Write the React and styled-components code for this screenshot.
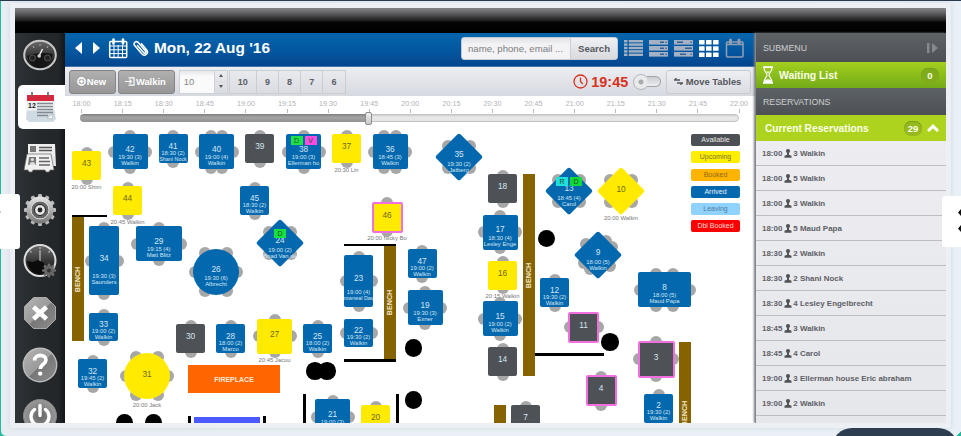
import React from 'react';
import styled, { createGlobalStyle, css } from 'styled-components';

const Global = createGlobalStyle`
  * { box-sizing: border-box; }
  html, body { margin: 0; padding: 0; overflow: hidden; background: #22bb9c; }
  body { font-family: "Liberation Sans", Arial, sans-serif; }
`;

const Page = styled.div`
  position: relative;
  width: 961px;
  height: 436px;
  overflow: hidden;
  padding-left: 1px;
  border-top: 1px solid #2a3850;
`;
const Frame = styled.div`
  height: 435px;
  padding: 2px 5px 3px 9px;
  background: linear-gradient(90deg, #e7edf3, #eaf0f5 50%, #e9f0f6);
  border-radius: 0 0 5px 5px;
`;
const Bezel = styled.div`
  width: 941px;
  height: 425px;
  padding: 5px 5px 5px 5px;
  background: #eceff4;
  border-radius: 0 0 3px 3px;
  box-shadow: 0 0 4px #cfd8df;
`;
const Device = styled.div`
  width: 931px;
  height: 415px;
  overflow: hidden;
  background: #fff;
`;
const StatusBar = styled.div`
  height: 25px;
  background: linear-gradient(#858589 0, #616164 5px, #2c2c2d 11px, #1a1a1b 13px, #050505 14px, #000 100%);
`;
const Columns = styled.div`
  display: grid;
  grid-template-columns: 50px 690px 191px;
  height: 390px;
`;

/* ---------- sidebar ---------- */
const Sidebar = styled.nav`
  display: flex;
  flex-direction: column;
  align-items: flex-end;
  background: linear-gradient(90deg, #2e3337, #24282b 50%, #23272a 86%, #14171a);
  overflow: hidden;
`;
const SideItem = styled.div`
  display: flex;
  align-items: center;
  justify-content: center;
  flex: none;
  width: 47px;
  height: 44px;
  margin-bottom: 7.6px;
  padding-right: 4px;
  border-radius: 5px 0 0 5px;
  background: ${p => (p.$active ? '#fff' : 'transparent')};
  svg { display: block; }
`;

/* ---------- main ---------- */
const Main = styled.main`
  display: flex;
  flex-direction: column;
  overflow: hidden;
`;
const Header = styled.header`
  display: flex;
  align-items: center;
  height: 34px;
  padding: 0 9px 4px 9px;
  background: linear-gradient(#0565ab, #0358a0 50%, #04458f 96%, #6790bb);
  svg { display: block; flex: none; }
`;
const DateNav = styled.div`
  display: flex;
  align-items: center;
  gap: 5px;
  width: 80px;
`;
const DateTitle = styled.h1`
  margin: 0;
  width: 307px;
  color: #fff;
  font-size: 15.4px;
  line-height: 20px;
  white-space: nowrap;
`;
const SearchBox = styled.div`
  display: flex;
  width: 157px;
  height: 23px;
  border-radius: 3px;
  overflow: hidden;
  background: linear-gradient(#dfe0e4, #f3f3f6 30%, #f3f3f6);
  border: 1px solid #c3cad6;
  line-height: 21px;
  font-size: 9.6px;
`;
const SearchHint = styled.span`
  width: 108px;
  padding-left: 6px;
  color: #7c7c80;
  white-space: nowrap;
`;
const SearchButton = styled.b`
  flex: 1;
  text-align: center;
  color: #57585d;
  background: linear-gradient(#eff0f3, #d9dade);
  border-left: 1px solid #cdced4;
`;
const Views = styled.div`
  display: flex;
  align-items: center;
  gap: 6px;
  margin-left: 6px;
`;
const Toolbar = styled.div`
  display: flex;
  align-items: center;
  height: 29px;
  padding: 0 4px;
  background: linear-gradient(#edeef2, #d6d9e0);
`;
const Button = styled.button`
  display: flex;
  align-items: center;
  justify-content: center;
  gap: ${p => (p.$light ? 3 : 1)}px;
  width: ${p => p.$w}px;
  height: 24px;
  margin: 0 ${p => p.$gap || 0}px 0 0;
  padding: 0 2px 0 0;
  border-radius: 3px;
  border: 1px solid ${p => (p.$light ? '#c8cad0' : '#858587')};
  background: ${p => (p.$light ? 'linear-gradient(#eeeff3, #dadce2)' : 'linear-gradient(#b0b0b1, #969697)')};
  color: ${p => (p.$light ? '#54565b' : '#fff')};
  font: bold 9.4px "Liberation Sans", Arial, sans-serif;
  white-space: nowrap;
`;
const Spinner = styled.div`
  display: grid;
  grid-template-columns: 34px 13px;
  grid-template-rows: 11px 11px;
  width: 49px;
  height: 24px;
  margin-right: 3px;
  border: 1px solid #cfd1d6;
  color: #86878b;
  font-size: 9.5px;
  line-height: 21px;
`;
const SpinValue = styled.span`
  grid-row: 1 / 3;
  padding-left: 4px;
  background: linear-gradient(#e6e7ea, #fafafb 25%);
`;
const SpinArrow = styled.span`
  display: flex;
  align-items: center;
  justify-content: center;
  border-left: 1px solid #cfd1d6;
  border-bottom: 1px solid #d9dbe0;
`;
const NumberGroup = styled.div`
  display: flex;
  height: 24px;
  width: 228px;
  margin-left: -2px;
`;
const NumberButton = styled.b`
  width: ${p => p.$w}px;
  border: solid #cbcdd3;
  border-width: 1px 1px 1px ${p => (p.$first ? 1 : 0)}px;
  background: linear-gradient(#e9eaee, #dadce2);
  color: #5d5f65;
  font-size: 9px;
  line-height: 22px;
  text-align: center;
`;
const Clock = styled.div`
  display: flex;
  align-items: center;
  gap: 3px;
  width: 60px;
  margin-left: 117px;
  color: #d8311c;
  font-size: 14.4px;
  font-weight: bold;
  svg { flex: none; }
`;
const Toggle = styled.div`
  display: flex;
  align-items: center;
  width: 29px;
  height: 16px;
  margin-right: 4px;
`;
const ToggleKnob = styled.span`
  width: 16px;
  height: 16px;
  flex: none;
  border-radius: 50%;
  border: 1px solid #b5b6ba;
  background: radial-gradient(#aaa 0 2px, #e9eaec 3px 100%);
`;
const ToggleTrack = styled.span`
  width: 14px;
  height: 11px;
  margin-left: -2px;
  border: 1px solid #a4a5aa;
  border-left: 0;
  border-radius: 0 6px 6px 0;
  background: linear-gradient(#cbccd0, #edeef0);
`;

/* ---------- timeline ---------- */
const Timeline = styled.section`
  height: 30px;
  background: #fff;
`;
const Hours = styled.div`
  display: flex;
  width: 700px;
  height: 17px;
  margin-left: -4px;
  padding-top: 3px;
`;
const Hour = styled.span`
  flex: none;
  display: flex;
  flex-direction: column;
  align-items: center;
  width: 41.1px;
  color: #b2b2b6;
  font-size: 7.2px;
  line-height: 9px;
  &::after { content: ""; width: 1px; height: 4px; margin-top: 1px; background: #bbb; }
`;
const Track = styled.div`
  display: flex;
  align-items: center;
  width: 659px;
  height: 8px;
  margin: 1px 0 0 15px;
  border-radius: 4px;
  border: 1px solid #c4c4c6;
  background: linear-gradient(#cfcfd1, #e9e9ea 40%, #e4e4e6);
`;
const Fill = styled.span`
  width: 285px;
  height: 8px;
  margin-left: -1px;
  flex: none;
  border-radius: 4px 0 0 4px;
  background: linear-gradient(#7f7f80, #a4a4a5 40%, #929293);
`;
const Handle = styled.span`
  width: 7px;
  height: 13px;
  flex: none;
  border: 1px solid #8c8c8e;
  border-radius: 2px;
  background: linear-gradient(#efefef, #c9c9cb);
`;

/* ---------- floor plan: a free canvas ---------- */
const Floor = styled.section`
  position: relative;
  flex: 1;
  overflow: hidden;
  background: #fff;
`;
/* Plan coordinates start at the corner of the whole screen. */
const Plan = styled.div`
  position: absolute;
  left: -65px;
  top: -126px;
  width: 755px;
  height: 423px;
`;
const place = css`
  position: absolute;
  left: ${p => p.$x}px;
  top: ${p => p.$y}px;
  width: ${p => p.$w}px;
  height: ${p => p.$h}px;
`;
const Block = styled.div`
  ${place}
  display: flex;
  align-items: center;
  justify-content: center;
  background: ${p => p.$c};
  color: #ffe9d8;
  font-size: 7px;
  font-weight: bold;
`;
const Upright = styled.span`
  flex: none;
  transform: rotate(-90deg);
  color: #f0e6c8;
  font-size: 7.2px;
`;
const Dot = styled.div`
  position: absolute;
  left: ${p => p.$x - 9}px;
  top: ${p => p.$y - 8.5}px;
  width: 17.5px;
  height: 17.5px;
  border-radius: 50%;
  background: #000;
`;
const fills = { blue: '#0468ae', yellow: '#ffea00', dark: '#4e5256' };
const TableBox = styled.div`
  ${place}
  color: ${p => (p.$tone === 'yellow' ? '#6f6920' : '#d3e5f3')};
`;
const Chair = styled.i`
  position: absolute;
  left: ${p => p.$x - 6}px;
  top: ${p => p.$y - 6}px;
  width: 12px;
  height: 12px;
  border-radius: 50%;
  background: #a7a7a8;
`;
const Top = styled.div`
  position: absolute;
  inset: ${p => (p.$shape === 'diamond' ? '7px' : '0')};
  border-radius: ${p => (p.$shape === 'round' ? '50%' : '2px')};
  transform: ${p => (p.$shape === 'diamond' ? 'rotate(45deg)' : 'none')};
  background: ${p => fills[p.$tone]};
  border: ${p => (p.$pink ? '2px solid #f26fe0' : '0')};
`;
const Line = styled.span`
  position: absolute;
  left: -2px;
  right: -2px;
  top: ${p => p.$y - 5}px;
  height: 10px;
  display: flex;
  justify-content: center;
  font-size: ${p => (p.$big ? 8.3 : p.$long ? 5.4 : 5.9)}px;
  line-height: 10px;
  white-space: nowrap;
`;
const Caption = styled.span`
  position: absolute;
  left: 50%;
  top: ${p => p.$y}px;
  transform: translateX(-50%);
  color: #77777a;
  font-size: 5.9px;
  line-height: 8px;
  white-space: nowrap;
`;
const Badges = styled.div`
  position: absolute;
  left: 0;
  right: 0;
  top: ${p => p.$y}px;
  display: flex;
  gap: 2px;
  justify-content: center;
`;
const Badge = styled.span`
  width: 12px;
  height: 9px;
  background: ${p => p.$c};
  color: #174f24;
  font-size: 7px;
  line-height: 9px;
  text-align: center;
`;
const Legend = styled.div`
  position: absolute;
  left: 691px;
  top: 134px;
  display: grid;
  gap: 5.25px;
  width: 49px;
`;
const LegendItem = styled.span`
  height: 12px;
  border-radius: 2px;
  background: ${p => p.$c};
  color: ${p => p.$ink};
  font-size: 7px;
  line-height: 12px;
  text-align: center;
`;

/* ---------- reservations panel ---------- */
const Panel = styled.aside`
  display: flex;
  flex-direction: column;
  overflow: hidden;
  background: linear-gradient(#eeeef3, #e6e7eb);
  border-left: 1px solid #85868c;
  box-shadow: -1px 0 2px #77797f;
  position: relative;
`;
const Heading = styled.div`
  flex: none;
  display: flex;
  align-items: center;
  justify-content: space-between;
  height: ${p => p.$h}px;
  padding: 0 8px 0 7px;
  background: linear-gradient(#5d6267, #4d5155);
  color: #cccdcf;
  font-size: 8.8px;
`;
const GreenRow = styled.div`
  flex: none;
  display: flex;
  align-items: center;
  height: 26px;
  padding: 0 7px 0 ${p => (p.$flat ? 9 : 6)}px;
  background: ${p => (p.$flat ? '#aed31f' : 'linear-gradient(#a3cf1e, #73ab18)')};
  color: #fbffe9;
  font-size: ${p => (p.$flat ? 10.2 : 10.4)}px;
  font-weight: bold;
`;
const GreenLabel = styled.span`
  flex: 1;
  padding-left: ${p => p.$pad || 0}px;
  white-space: nowrap;
`;
const Count = styled.span`
  width: 18px;
  height: 15px;
  margin-right: ${p => p.$gap || 0}px;
  border-radius: 7px;
  background: ${p => p.$c};
  box-shadow: inset 0 1px 1px #78a01c;
  font-size: 9.5px;
  line-height: 15px;
  text-align: center;
`;
const Reservation = styled.div`
  flex: none;
  display: flex;
  align-items: center;
  gap: 1.5px;
  height: 25px;
  padding-left: 6px;
  border-bottom: 1px solid #bdbec4;
  color: #5e6066;
  font-size: 7.95px;
  font-weight: bold;
  white-space: nowrap;
`;

/* ---------- overlays of the surrounding page ---------- */
const PrevTab = styled.div`
  position: absolute;
  left: 0;
  top: 193px;
  width: 20px;
  height: 55px;
  background: #fff;
  border-radius: 0 3px 3px 0;
`;
const NextTab = styled(PrevTab)`
  left: 942px;
  top: 195px;
  width: 19px;
  height: 51px;
  border-radius: 3px 0 0 3px;
`;
const ChatPill = styled.div`
  position: absolute;
  left: 832px;
  top: 427px;
  width: 126px;
  height: 40px;
  border-radius: 20px 20px 0 0;
  background: #2c3e50;
`;
const Corner = styled.div`
  position: absolute;
  left: 955px;
  top: 429px;
  width: 8px;
  height: 8px;
  background: linear-gradient(135deg, transparent 50%, #20b79a 50%);
`;

/* ---------- data ---------- */
const T = (n, x, y, w, h, tone, chairs, time, name, extra) => ({ n, x, y, w, h, tone, chairs, time, name, ...extra });
const all = 't b l r';
const tables = [
  T(43, 72, 151, 29, 29, 'yellow', 't b', null, null, { caption: '20:00 Shim' }),
  T(42, 112.5, 134, 35, 35, 'blue', all, '19:30 (3)', 'Walkin'),
  T(41, 158.5, 134, 29, 29, 'blue', 't b', '18:30 (2)', 'Shani Nock'),
  T(40, 199, 134, 35, 35, 'blue', 'tt bb l r', '19:00 (4)', 'Walkin'),
  T(39, 245.3, 134, 29, 29, 'dark', 't b'),
  T(38, 286, 134, 35, 35, 'blue', all, '19:00 (3)', 'Ellerman ho', { badges: [['D', '#1fe24a'], ['V', '#ff4be0']] }),
  T(37, 332, 134, 29, 29, 'yellow', 't b', null, null, { caption: '20:30 Lin' }),
  T(36, 372.5, 134, 35, 35, 'blue', 'tt bb l r', '18:45 (3)', 'Walkin'),
  T(35, 435, 133, 48, 48, 'blue', 'x', '19:30 (2)', 'Jatberg', { shape: 'diamond' }),
  T(44, 113, 186, 29, 29, 'yellow', 't b', null, null, { caption: '20:45 Walkin' }),
  T(45, 240, 186, 29, 29, 'blue', 't b', '18:30 (2)', 'Walkin'),
  T(46, 371.5, 201.5, 31, 31, 'yellow', 't b', null, null, { pink: true, caption: '20:00 Nicky Bo' }),
  T(24, 256, 219, 48, 48, 'blue', 'x', '19:00 (2)', 'Bnad Van de', { shape: 'diamond', badges: [['D', '#16e03c']] }),
  T(18, 488, 174, 29, 29, 'dark', 't b'),
  T(17, 482.5, 214.5, 35, 35, 'blue', all, '18:30 (4)', 'Lesley Enge'),
  T(13, 545, 167, 48, 48, 'blue', 'x', '18:45 (4)', 'Carol', { shape: 'diamond', badges: [['R', '#1fe0dc'], ['D', '#10d93a']] }),
  T(10, 597, 167, 48, 48, 'yellow', 'x', null, null, { shape: 'diamond', caption: '20:00 Walkin' }),
  T(9, 574, 231, 48, 48, 'blue', 'y', '18:00 (5)', 'Walkin', { shape: 'diamond' }),
  T(16, 488, 260.5, 29, 29, 'yellow', 't b', null, null, { caption: '20:15 Walkin' }),
  T(15, 482.5, 301, 35, 35, 'blue', all, '19:00 (2)', 'Walkin'),
  T(14, 488, 347, 29, 29, 'dark', 't b'),
  T(12, 540, 278, 29, 29, 'blue', 't b', '19:30 (2)', 'Walkin'),
  T(11, 568, 311.5, 31, 31, 'dark', 'l r', null, null, { pink: true }),
  T(8, 638, 272, 53, 35, 'blue', 'tt bb l r', '18:00 (5)', 'Maud Papa'),
  T(3, 637.5, 340.5, 37, 37, 'dark', all, null, null, { pink: true }),
  T(4, 585.5, 375, 31, 31, 'dark', 't b', null, null, { pink: true }),
  T(2, 644, 393.5, 29, 29, 'blue', 't', '19:30 (2)', 'Walkin'),
  T(7, 511, 405, 29, 29, 'dark', 't'),
  T(34, 89, 226, 30, 69, 'blue', all, '19:30 (3)', 'Saunders'),
  T(33, 89, 313, 29, 28, 'blue', 't b', '19:00 (2)', 'Walkin'),
  T(29, 135.5, 226, 46.5, 35, 'blue', all, '19:15 (4)', 'Matt Blitz'),
  T(26, 193, 249, 46, 46, 'blue', 'o', '19:30 (6)', 'Albrecht', { shape: 'round' }),
  T(30, 176, 324, 29, 29, 'dark', 't b'),
  T(28, 216, 324, 29, 29, 'blue', 't b', '18:00 (2)', 'Marco'),
  T(27, 257, 318.5, 35, 35, 'yellow', all, null, null, { caption: '20:45 Jacou' }),
  T(25, 303, 324, 29, 29, 'blue', 't b', '18:00 (2)', 'Walkin'),
  T(32, 78, 359, 29, 29, 'blue', 't b', '19:45 (2)', 'Walkin'),
  T(31, 124, 353, 46, 46, 'yellow', 'o', null, null, { shape: 'round', caption: '20:00 Jack' }),
  T(23, 344, 255, 29, 52, 'blue', all, '19:00 (4)', 'rowneal Dav'),
  T(22, 344, 319, 29, 28, 'blue', 'l r', '19:30 (2)', 'Walkin'),
  T(47, 407.5, 249, 29, 29, 'blue', 't b', '19:00 (2)', 'Walkin'),
  T(19, 407.5, 290, 35, 35, 'blue', all, '19:30 (3)', 'Exner'),
  T(21, 315, 399, 35, 35, 'blue', 't l r', '19:00 (3)', null),
  T(20, 361, 405, 29, 29, 'yellow', 't'),
];

const around = {
  x: [[-11, -11], [11, -11], [-11, 11], [11, 11]],
  y: [[-12, -11], [8, -14], [14, -8], [-14, 8], [-8, 14], [12, 11]],
  o: [[-21, 0], [21, 0], [-11, -19], [11, -19], [-11, 19], [11, 19]],
};
function chairSpots({ chairs, w, h }) {
  if (around[chairs]) return around[chairs].map(([x, y]) => [w / 2 + x, h / 2 + y]);
  const side = {
    t: [[w / 2, 1.5]], b: [[w / 2, h - 1.5]], l: [[1.5, h / 2]], r: [[w - 1.5, h / 2]],
    tt: [[w / 3, 1.5], [(w * 2) / 3, 1.5]],
    bb: [[w / 3, h - 1.5], [(w * 2) / 3, h - 1.5]],
  };
  return chairs.split(' ').flatMap(c => side[c]);
}

function Table({ t }) {
  const nameY = t.h * 0.78 + (t.shape ? -0.5 : 2);
  return (
    <TableBox $x={t.x} $y={t.y} $w={t.w} $h={t.h} $tone={t.tone}>
      {chairSpots(t).map(([x, y], i) => <Chair key={i} $x={x} $y={y} />)}
      <Top $shape={t.shape} $tone={t.tone} $pink={t.pink} />
      <Line $big $y={t.h / 2 - (t.time ? 2.7 : 2.2)}>{t.n}</Line>
      {t.time && <Line $y={nameY - 6}>{t.time}</Line>}
      {t.name && <Line $y={nameY} $long={t.name.length > 9 && t.w < 32}>{t.name}</Line>}
      {t.badges && <Badges $y={t.shape ? 9.5 : 2}>{t.badges.map(([l, c]) => <Badge key={l} $c={c}>{l}</Badge>)}</Badges>}
      {t.caption && <Caption $y={t.shape ? t.h - 1 + (t.shape === 'round' ? 3 : 0) : t.h + (t.pink ? 1 : 2.5)}>{t.caption}</Caption>}
    </TableBox>
  );
}

const BROWN = '#876300';
const blocks = [
  [72, 214.5, 35, 2.5, '#000'], [344, 243.5, 52, 2.8, '#000'], [344, 359, 52, 2.8, '#000'], [534, 353, 70, 2.6, '#000'],
  [303, 394, 3, 32, '#000'], [396, 394, 3, 32, '#000'], [187.5, 416, 3, 8, '#000'], [263, 416, 2.5, 8, '#000'],
  [193.5, 416.5, 66.5, 8, '#4a5aff'],
  [494, 405, 11.5, 20, BROWN],
];
const benches = [[72, 217, 11.5, 124], [384.3, 246, 11.5, 113], [523, 174, 11.7, 202], [679, 341.5, 11.7, 144]];
const dots = [[546.5, 238], [610, 341.5], [413.5, 347.5], [413.5, 399.5], [315, 370.5], [327, 370.5], [124.5, 422.5], [153.5, 422.5]];
const legend = [
  ['Available', '#4c5054', '#e7e7e7'], ['Upcoming', '#ffee00', '#77732a'], ['Booked', '#ffb400', '#8d6a1c'],
  ['Arrived', '#0468ae', '#e2effa'], ['Leaving', '#90d2fe', '#507c9c'], ['Dbl Booked', '#fb0000', '#ffdcdc'],
];
const hours = ['18:00', '18:15', '18:30', '18:45', '19:00', '19:15', '19:30', '19:45', '20:00', '20:15', '20:30', '20:45', '21:00', '21:15', '21:30', '21:45', '22:00'];
const reservations = [
  ['18:00', '3 Walkin'], ['18:00', '5 Walkin'], ['18:00', '3 Walkin'], ['18:00', '5 Maud Papa'], ['18:30', '2 Walkin'],
  ['18:30', '2 Shani Nock'], ['18:30', '4 Lesley Engelbrecht'], ['18:45', '3 Walkin'], ['18:45', '4 Carol'],
  ['19:00', '3 Ellerman house Eric abraham'], ['19:00', '2 Walkin'],
];

/* ---------- icons ---------- */
const Defs = () => (
  <defs>
    <linearGradient id="metal" x1="0" y1="0" x2="0" y2="1"><stop offset="0" stopColor="#e6e6e6" /><stop offset="1" stopColor="#777" /></linearGradient>
    <linearGradient id="gloss" x1="0" y1="0" x2="1" y2="1"><stop offset="0" stopColor="#b5b5b5" /><stop offset=".5" stopColor="#9a9a9a" /><stop offset=".52" stopColor="#777" /><stop offset="1" stopColor="#8d8d8d" /></linearGradient>
    <linearGradient id="glass" x1="0" y1="0" x2="0" y2="1"><stop offset="0" stopColor="#6a6a6a" /><stop offset=".55" stopColor="#333" /><stop offset="1" stopColor="#111" /></linearGradient>
    <radialGradient id="steel"><stop offset="0" stopColor="#666" /><stop offset="1" stopColor="#999" /></radialGradient>
  </defs>
);
const Icon = ({ children }) => <svg width="36" height="36" viewBox="0 0 36 36"><Defs />{children}</svg>;
const teeth = (n, cx, cy, r, w, l, c) => Array.from({ length: n }, (_, i) => (
  <rect key={i} x={cx - w / 2} y={cy - r - l} width={w} height={l + 3} rx="1" fill={c} transform={`rotate(${(i * 360) / n} ${cx} ${cy})`} />
));
const Gauge = () => (
  <Icon>
    <ellipse cx="18" cy="18" rx="15.8" ry="14.2" fill="url(#glass)" stroke="#c8c8c8" strokeWidth="2" />
    <path d="M5.500 19c6-3 18-4 25-2-1 8-6 13-12.500 13S6.500 26 5.500 19z" fill="#151515" />
    <circle cx="10.500" cy="21" r="3" fill="#222" stroke="#555" /><circle cx="25.500" cy="21" r="3" fill="#222" stroke="#555" />
    <path d="M17 19l3.500-7" stroke="#eee" strokeWidth="1.500" /><path d="M18 7v2M11 9l1 2M26 9l-1 2" stroke="#aaa" />
    <circle cx="17.200" cy="19" r="1.800" fill="#ccc" />
  </Icon>
);
const Calendar = () => (
  <Icon>
    <path d="M5 11h28v19l-3 2H6l-2-2z" fill="#eef0f2" /><path d="M4 30l1-8 27-1 2 9-3 3H7z" fill="#cfdbe2" />
    <path d="M5 6h27v6H5z" fill="#d8283e" /><path d="M10 3v5M26 3v5" stroke="#666" strokeWidth="1.6" />
    <path d="M15 14.5h16M15 17.5h16M15 20.5h16M15 23.5h16M15 26.5h11" stroke="#858a90" strokeWidth="1.3" />
    <path d="M25 29l6-4-1 5z" fill="#fff" stroke="#999" strokeWidth=".5" />
    <text x="6" y="18.5" fontSize="7" fontWeight="bold" fill="#222" fontFamily="Liberation Sans">12</text>
  </Icon>
);
const Cards = () => (
  <Icon>
    <path d="M7 4h26l1 22h-4l-2 3h-3V14z" fill="#e6e6e6" /><path d="M6 4h27v12H6z" fill="#eee" />
    <path d="M8 6h6v6H8z" fill="#777" /><path d="M17 7.500h13M17 10.500h13" stroke="#555" strokeWidth="1.4" />
    <path d="M5 14h24l3 16h-4l-1 2h-3l-1-2H11l-1 2H7l-1-2H2z" fill="#f1f1f1" stroke="#666" strokeWidth=".7" />
    <path d="M7 17h7v8H6z" fill="#777" /><circle cx="10.400" cy="19.500" r="1.600" fill="#ddd" /><path d="M7.500 25c0-4 6-4 6 0z" fill="#ddd" />
    <path d="M17 18h10M17 21.500h11M17 25h11" stroke="#666" strokeWidth="1.500" />
  </Icon>
);
const Gear = () => (
  <Icon>
    {teeth(12, 18, 18, 12, 4, 4, '#b9b9b9')}
    <circle cx="18" cy="18" r="13.500" fill="url(#metal)" /><circle cx="18" cy="18" r="9" fill="#666" stroke="#ddd" />
    <circle cx="18" cy="18" r="5.500" fill="#e4e4e4" stroke="#222" /><circle cx="18" cy="18" r="2.400" fill="#222" />
  </Icon>
);
const ClockGear = () => (
  <Icon>
    <circle cx="18" cy="17.500" r="15.500" fill="url(#glass)" stroke="#ddd" strokeWidth="2" />
    <path d="M18 7v11M18 4v2M8 8l1.500 1.500M28 8l-1.500 1.500" stroke="#aaa" strokeWidth="1.400" />
    <path d="M5 18l6 1 5-2 6 3v8l-4 3c-7 0-12-6-13-13z" fill="#0b0b0b" />
    {teeth(8, 27, 27.500, 4, 2.600, 3, '#6e6e6e')}<circle cx="27" cy="27.500" r="5" fill="#666" /><circle cx="27" cy="27.500" r="2" fill="#333" />
  </Icon>
);
const Close = () => (
  <Icon>
    <path d="M11.500 2.500h13l9 9v13l-9 9h-13l-9-9v-13z" fill="url(#gloss)" stroke="#a9a9a9" />
    <path d="M11.500 12l13 12M24.500 12l-13 12" stroke="#fff" strokeWidth="4.600" />
  </Icon>
);
const Help = () => (
  <Icon>
    <circle cx="18" cy="18" r="16.700" fill="url(#gloss)" stroke="#bbb" strokeWidth="1.400" />
    <path d="M12.500 13.500c0-7 11.500-6.500 11.500-.5 0 4.500-5.500 4-5.700 9" fill="none" stroke="#fff" strokeWidth="3.600" /><circle cx="18.200" cy="26.600" r="2.200" fill="#fff" />
  </Icon>
);
const Power = () => (
  <Icon>
    <circle cx="18" cy="18" r="16.500" fill="url(#steel)" stroke="#888" />
    <path d="M12.500 11.500a9 9 0 1 0 11 0M18 7.500v10" fill="none" stroke="#fff" strokeWidth="3.400" strokeLinecap="round" />
  </Icon>
);
const sideIcons = [Gauge, Calendar, Cards, Gear, ClockGear, Close, Help, Power];

const Rows = ({ kind }) => (
  <svg width="19" height="17" viewBox="0 0 19 17" fill="#a4b0c3">
    {kind === 'list'
      ? [0, 3.4, 6.8, 10.2, 13.6].map(y => <g key={y}><rect y={y} width="3.500" height="2.400" /><rect x="4.800" y={y} width="14.200" height="2.400" /></g>)
      : [0, 6, 12].map((y, i) => (
        <g key={y}><rect y={y} width="19" height="4.600" />
          <rect x={kind === 'a' ? 11 : [3, 11, 6][i]} y={y + 1.500} width={kind === 'a' ? 4 : 6} height="1.500" fill="#315f96" />
          <rect x="16.500" y={y + 1.500} width="1.300" height="1.500" fill="#315f96" /></g>
      ))}
  </svg>
);
const Grid = () => (
  <svg width="20" height="17" viewBox="0 0 20 17" fill="#fff">
    {[0, 6.2, 12.4].flatMap(y => [0, 7, 14].map(x => <rect key={`${x}-${y}`} x={x} y={y} width="5.600" height="4.600" rx=".6" />))}
  </svg>
);
const Person = () => (
  <svg width="8" height="9" viewBox="0 0 8 9" fill="#515358"><circle cx="4" cy="2.100" r="2.100" /><path d="M3 3h2v2.800l2.500 1V8.800H.5V6.800l2.500-1z" /></svg>
);

export default function App() {
  return (
    <Page>
      <Global />
      <Frame><Bezel><Device>
        <StatusBar />
        <Columns>
          <Sidebar>
            {sideIcons.map((I, i) => <SideItem key={i} $active={i === 1}><I /></SideItem>)}
          </Sidebar>
          <Main>
            <Header>
              <DateNav>
                <svg width="54" height="22" viewBox="0 0 54 22" fill="none">
                  <path d="M8 5v12L1 11zM19 5v12l7-6z" fill="#fff" />
                  <g stroke="#fff"><rect x="35.700" y="4.500" width="17" height="16" rx="1" strokeWidth="1.500" /><path d="M36 9h17M36 12.800h17M36 16.600h17M40 8v12M44.200 8v12M48.500 8v12" /><path d="M39.500 2.500v4M49 2.500v4" strokeWidth="2.600" strokeLinecap="round" /></g>
                </svg>
                <svg width="16" height="18" viewBox="0 0 16 18" fill="none" stroke="#fff" strokeWidth="1.500" strokeLinecap="round">
                  <path d="M4.500 6.500l6 7c1.300 1.500 3-.1 1.900-1.500L5.300 3.600C3.300 1.300-.3 4 1.700 6.600l7 8.200c3 3.300 7.500-.3 5-3.800L8.500 4.800" />
                </svg>
              </DateNav>
              <DateTitle>Mon, 22 Aug '16</DateTitle>
              <SearchBox><SearchHint>name, phone, email ...</SearchHint><SearchButton>Search</SearchButton></SearchBox>
              <Views>
                <Rows kind="list" /><Rows kind="a" /><Rows kind="b" /><Grid />
                <svg width="20" height="20" viewBox="0 0 20 20" fill="none" stroke="#8e9db2"><rect x="1.500" y="4" width="16.500" height="15" rx="1" strokeWidth="1.600" /><path d="M2 6.500h16" strokeWidth="1.500" /><path d="M5.500 2v3M14 2v3" strokeWidth="3" strokeLinecap="round" /></svg>
              </Views>
            </Header>
            <Toolbar>
              <Button $w={47} $gap={2}>
                <svg width="9" height="9" viewBox="0 0 9 9" fill="none" stroke="#fff" strokeWidth="1.600"><circle cx="4.500" cy="4.500" r="3.600" /><path d="M2.500 4.500h4M4.500 2.500v4" /></svg>New
              </Button>
              <Button $w={57} $gap={4}>
                <svg width="10" height="9" viewBox="0 0 10 9" fill="none" stroke="#fff" strokeWidth="1.200"><path d="M3.500.8H9v7.400H3.500M0 4.500h6.500M4.500 2.500l2 2-2 2" /></svg>Walkin
              </Button>
              <Spinner>
                <SpinValue>10</SpinValue>
                <SpinArrow><svg width="4" height="3"><path d="M0 3h4L2 0z" fill="#555" /></svg></SpinArrow>
                <SpinArrow><svg width="4" height="3"><path d="M0 0h4L2 3z" fill="#555" /></svg></SpinArrow>
              </Spinner>
              <NumberGroup>
                <NumberButton $w={28} $first>10</NumberButton>
                {[9, 8, 7, 6].map(n => <NumberButton key={n} $w={22.2}>{n}</NumberButton>)}
              </NumberGroup>
              <Clock>
                <svg width="15" height="15" viewBox="0 0 15 15" fill="none" stroke="#d8311c" strokeWidth="1.300"><circle cx="7.500" cy="7.500" r="6.500" /><path d="M7.500 3.500v4l2.300 2.500" /></svg>
                19:45
              </Clock>
              <Toggle><ToggleKnob /><ToggleTrack /></Toggle>
              <Button $light $w={85}>
                <svg width="9" height="7" viewBox="0 0 9 7" fill="none" stroke="#54565b" strokeWidth="1.300"><path d="M0 2h6M2.500.2L.6 2M3 5h6M6.500 6.800L8.400 5" /></svg>
                Move Tables
              </Button>
            </Toolbar>
            <Timeline>
              <Hours>{hours.map(h => <Hour key={h}>{h}</Hour>)}</Hours>
              <Track><Fill /><Handle /></Track>
            </Timeline>
            <Floor>
              <Plan>
                {blocks.map(([x, y, w, h, c], i) => <Block key={i} $x={x} $y={y} $w={w} $h={h} $c={c} />)}
                <Block $x={188} $y={365} $w={92} $h={28} $c="#ff6600">FIREPLACE</Block>
                {benches.map(([x, y, w, h]) => <Block key={x} $x={x} $y={y} $w={w} $h={h} $c={BROWN}><Upright>BENCH</Upright></Block>)}
                {tables.map(t => <Table key={t.n} t={t} />)}
                {dots.map(([x, y]) => <Dot key={`${x}-${y}`} $x={x} $y={y} />)}
                <Legend>{legend.map(([l, c, ink]) => <LegendItem key={l} $c={c} $ink={ink}>{l}</LegendItem>)}</Legend>
              </Plan>
            </Floor>
          </Main>
          <Panel>
            <Heading $h={29}>SUBMENU
              <svg width="11" height="10" viewBox="0 0 11 10" fill="#85888c"><path d="M0 0h2.500v10H0zM5 0v10l6-5z" /></svg>
            </Heading>
            <GreenRow>
              <svg width="12" height="18" viewBox="0 0 12 18" fill="none" stroke="#fff" strokeWidth="1.200"><path d="M1 1.200h10M1 16.800h10" strokeWidth="1.800" /><path d="M2 1.500C2 6 5 6.500 5 9s-3 3-3 7.500M10 1.500C10 6 7 6.500 7 9s3 3 3 7.500" /><path d="M3 16c.5-3 5.500-3 6 0z" fill="#fff" /><path d="M4.500 5.500h3L6 7.500z" fill="#fff" stroke="none" /></svg>
              <GreenLabel $pad={5}>Waiting List</GreenLabel>
              <Count $c="#80ac1c">0</Count>
            </GreenRow>
            <Heading $h={27}>RESERVATIONS</Heading>
            <GreenRow $flat>
              <GreenLabel>Current Reservations</GreenLabel>
              <Count $c="#96b91f" $gap={5}>29</Count>
              <svg width="12" height="8" viewBox="0 0 12 8" fill="none" stroke="#fff" strokeWidth="3"><path d="M1 7l5-4.800L11 7" /></svg>
            </GreenRow>
            {reservations.map(([time, who], i) => <Reservation key={i}>{time}<Person />{who}</Reservation>)}
          </Panel>
        </Columns>
      </Device></Bezel></Frame>
      <PrevTab><svg width="3" height="20" viewBox="0 0 3 20"><path d="M0 18h1" stroke="#999" /></svg></PrevTab>
      <NextTab><svg width="19" height="51" viewBox="0 0 19 51"><path d="M19 13l-3 3.500 3 3.500zM19 29l-3 3.500 3 3.500z" fill="#111" /></svg></NextTab>
      <ChatPill />
      <Corner />
    </Page>
  );
}
